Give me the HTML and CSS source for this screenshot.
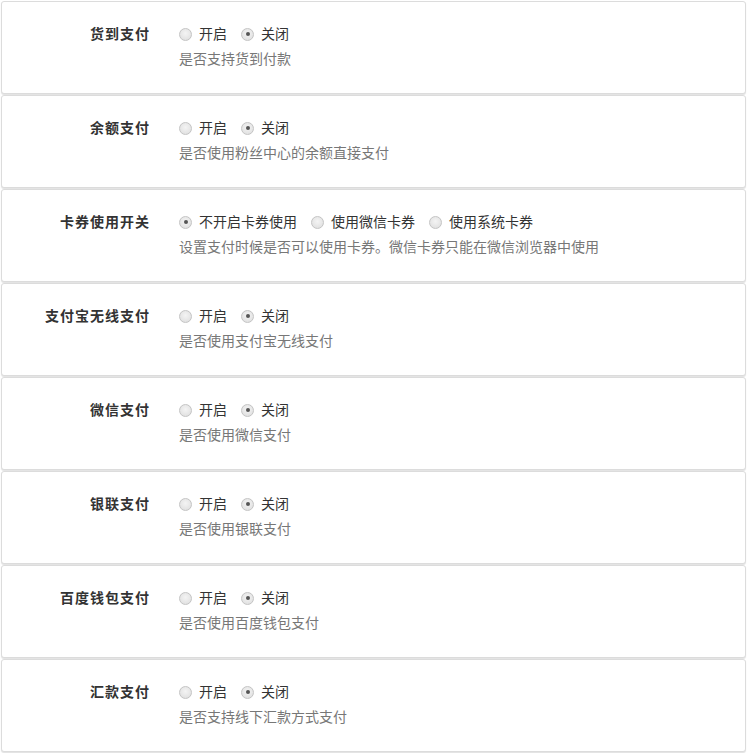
FILE: index.html
```html
<!DOCTYPE html>
<html lang="zh-CN">
<head>
<meta charset="utf-8">
<title>支付方式</title>
<link rel="stylesheet" href="styles.css">
</head>
<body>
<div class="list">
  <div class="panel">
    <div class="label">货到支付</div>
    <div class="ctrl">
      <div class="opts">
        <span class="opt"><i class="radio"></i>开启</span>
        <span class="opt"><i class="radio on"></i>关闭</span>
      </div>
      <div class="help">是否支持货到付款</div>
    </div>
  </div>
  <div class="panel">
    <div class="label">余额支付</div>
    <div class="ctrl">
      <div class="opts">
        <span class="opt"><i class="radio"></i>开启</span>
        <span class="opt"><i class="radio on"></i>关闭</span>
      </div>
      <div class="help">是否使用粉丝中心的余额直接支付</div>
    </div>
  </div>
  <div class="panel">
    <div class="label">卡券使用开关</div>
    <div class="ctrl">
      <div class="opts">
        <span class="opt"><i class="radio on"></i>不开启卡券使用</span>
        <span class="opt"><i class="radio"></i>使用微信卡券</span>
        <span class="opt"><i class="radio"></i>使用系统卡券</span>
      </div>
      <div class="help">设置支付时候是否可以使用卡券。微信卡券只能在微信浏览器中使用</div>
    </div>
  </div>
  <div class="panel">
    <div class="label">支付宝无线支付</div>
    <div class="ctrl">
      <div class="opts">
        <span class="opt"><i class="radio"></i>开启</span>
        <span class="opt"><i class="radio on"></i>关闭</span>
      </div>
      <div class="help">是否使用支付宝无线支付</div>
    </div>
  </div>
  <div class="panel">
    <div class="label">微信支付</div>
    <div class="ctrl">
      <div class="opts">
        <span class="opt"><i class="radio"></i>开启</span>
        <span class="opt"><i class="radio on"></i>关闭</span>
      </div>
      <div class="help">是否使用微信支付</div>
    </div>
  </div>
  <div class="panel">
    <div class="label">银联支付</div>
    <div class="ctrl">
      <div class="opts">
        <span class="opt"><i class="radio"></i>开启</span>
        <span class="opt"><i class="radio on"></i>关闭</span>
      </div>
      <div class="help">是否使用银联支付</div>
    </div>
  </div>
  <div class="panel">
    <div class="label">百度钱包支付</div>
    <div class="ctrl">
      <div class="opts">
        <span class="opt"><i class="radio"></i>开启</span>
        <span class="opt"><i class="radio on"></i>关闭</span>
      </div>
      <div class="help">是否使用百度钱包支付</div>
    </div>
  </div>
  <div class="panel">
    <div class="label">汇款支付</div>
    <div class="ctrl">
      <div class="opts">
        <span class="opt"><i class="radio"></i>开启</span>
        <span class="opt"><i class="radio on"></i>关闭</span>
      </div>
      <div class="help">是否支持线下汇款方式支付</div>
    </div>
  </div>
</div>
</body>
</html>
```
FILE: styles.css
```css
html, body {
  margin: 0;
  padding: 0;
  background: #ffffff;
}
body {
  font-family: "Liberation Sans", "Noto Sans CJK SC", sans-serif;
  font-size: 14px;
  color: #333333;
}
.list {
  padding: 1px 1px 0 1px;
}
.panel {
  display: flex;
  box-sizing: border-box;
  height: 93px;
  margin-bottom: 1px;
  padding: 22px 0 24px 0;
  border: 1px solid #dcdcdc;
  border-radius: 3px;
  box-shadow: 0 1px 1px rgba(0, 0, 0, 0.12);
  background: #ffffff;
}
.label {
  box-sizing: border-box;
  width: 177px;
  padding-right: 29px;
  text-align: right;
  font-weight: bold;
  letter-spacing: 1px;
  line-height: 20px;
  color: #333333;
}
.ctrl {
  display: flex;
  flex-direction: column;
}
.opts {
  display: flex;
  align-items: center;
  gap: 14px;
  height: 20px;
  line-height: 20px;
  color: #333333;
}
.opt {
  display: flex;
  align-items: center;
}
.radio {
  display: inline-block;
  box-sizing: border-box;
  width: 13px;
  height: 13px;
  margin-right: 7px;
  border-radius: 50%;
  border: 1px solid #c4c4c4;
  background: radial-gradient(circle at 50% 40%, #f4f4f4 0%, #dcdcdc 100%);
  position: relative;
}
.radio.on::after {
  content: "";
  position: absolute;
  left: 3.5px;
  top: 3.5px;
  width: 4px;
  height: 4px;
  border-radius: 50%;
  background: #555555;
}
.help {
  margin-top: 5px;
  line-height: 20px;
  color: #777777;
}
```
